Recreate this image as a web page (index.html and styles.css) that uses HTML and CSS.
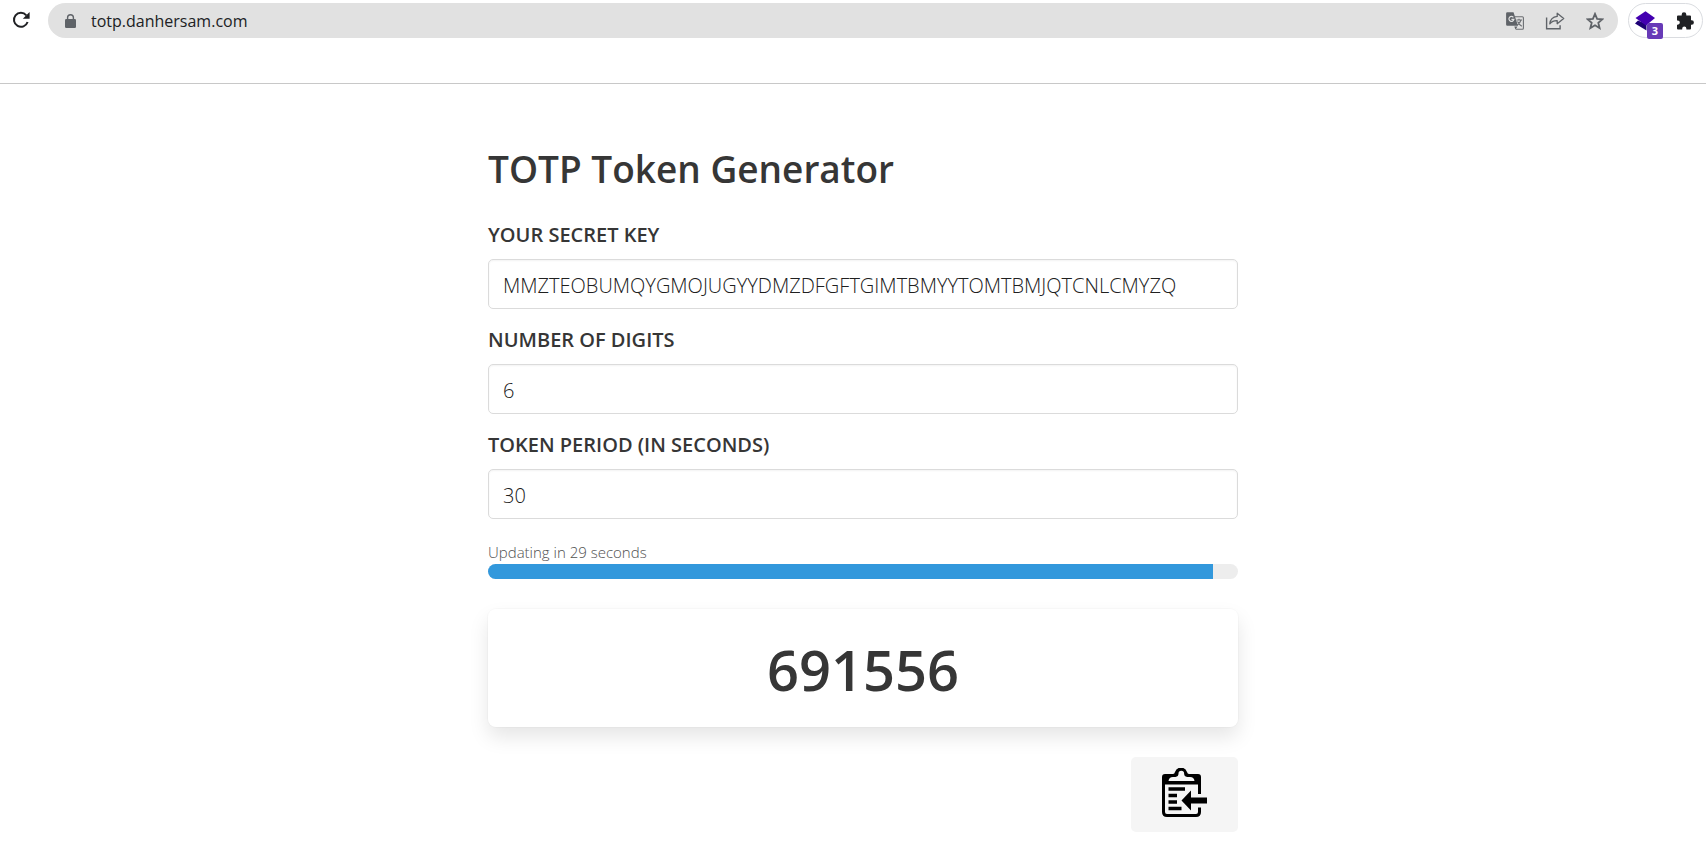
FILE: index.html
```html
<!DOCTYPE html>
<html lang="en">
<head>
<meta charset="utf-8">
<title>TOTP Token Generator</title>
<link rel="stylesheet" href="styles.css">
</head>
<body>
<header class="toolbar">
  <button class="icon-button reload" type="button" aria-label="Reload">
    <svg width="18" height="18" viewBox="0 0 18 18"><path d="M14.300 4.300A7 7 0 1 0 15.600 11" fill="none" stroke="#202124" stroke-width="2"/><path d="M17.600 1v6.800h-6.800z" fill="#202124"/></svg>
  </button>
  <div class="omnibox">
    <svg class="lock" width="11" height="14" viewBox="0 0 11 14"><path d="M2.600 5.500V3.600a2.900 2.900 0 0 1 5.800 0v1.900" fill="none" stroke="#5f6368" stroke-width="1.400"/><rect y="5" width="11" height="9" rx="1.200" fill="#5f6368"/></svg>
    <input class="address" type="text" value="totp.danhersam.com" aria-label="Address">
    <div class="actions">
      <button class="icon-button" type="button" aria-label="Translate">
        <svg width="18" height="18" viewBox="0 0 18 18"><path d="M9 4.700h7.400q1 0 1 1v10.500q0 1-1 1H9.800" fill="none" stroke="#6b6e72" stroke-width="1.100"/><path d="M1.300.2h6.200l4.500 13.500H1.300Q.1 13.700.1 12.500V1.400Q.1.200 1.300.2zM8.300 14.500h3.200l-2 2.900z" fill="#5f6368"/><path d="M7.400 5.300A2.500 2.500 0 1 0 7.900 7.400H5.400" fill="none" stroke="#e1e1e1" stroke-width="1.200"/><path d="M10.500 8h5.500M13 6.700V8M15 8q-.8 3-4 5.300M11.500 9.500q1.500 3 4.300 4.700" fill="none" stroke="#6b6e72" stroke-width="1.100"/></svg>
      </button>
      <button class="icon-button" type="button" aria-label="Share">
        <svg width="20" height="18" viewBox="0 0 20 18"><path d="M1.600 5.500v11.200h13.500v-3.400" fill="none" stroke="#5f6368" stroke-width="1.400"/><path d="M12.200 1.200l6.500 5.300-6.500 5.200V8.700q-4.700-.2-7.400 3.200.7-6.800 7.400-7.500z" fill="none" stroke="#5f6368" stroke-width="1.300" stroke-linejoin="round"/></svg>
      </button>
      <button class="icon-button" type="button" aria-label="Bookmark">
        <svg width="18" height="18" viewBox="0 0 18 18"><path d="M9 1.900l2.100 5 5.300.4-4.100 3.500 1.300 5.200L9 13.200 4.400 16l1.300-5.200-4.100-3.500 5.300-.4z" fill="none" stroke="#5f6368" stroke-width="1.800"/></svg>
      </button>
    </div>
  </div>
  <div class="extensions">
    <button class="icon-button layers" type="button" aria-label="Extension, 3 items">
      <svg width="20" height="20" viewBox="0 0 20 20"><path d="M0 12.500l3-3 8.500 3.500v6.500z" fill="#1d0075"/><path d="M.5 7L10.500.3 20 7l-9 7.500z" fill="#4300b0"/></svg>
      <span class="badge">3</span>
    </button>
    <button class="icon-button" type="button" aria-label="Extensions">
      <svg width="18" height="18" viewBox="0 0 18 18"><path d="M1 4.500q0-1 1-1h3.700V2.600a2.300 2.300 0 0 1 4.600 0v.9H14q1 0 1 1v3.800h.7a2.200 2.200 0 0 1 0 4.400H15v3.800q0 1-1 1h-3.600v-.8a2.100 2.100 0 0 0-4.200 0v.8H2q-1 0-1-1v-3.800h.7a2.150 2.150 0 0 0 0-4.300H1z" fill="#202124"/></svg>
    </button>
  </div>
</header>
<main class="page">
  <form class="generator">
    <h1 class="title">TOTP Token Generator</h1>
    <div class="field">
      <label class="label" for="secret">YOUR SECRET KEY</label>
      <input class="input" id="secret" type="text" value="MMZTEOBUMQYGMOJUGYYDMZDFGFTGIMTBMYYTOMTBMJQTCNLCMYZQ" spellcheck="false">
    </div>
    <div class="field">
      <label class="label" for="digits">NUMBER OF DIGITS</label>
      <input class="input" id="digits" type="text" value="6">
    </div>
    <div class="field">
      <label class="label" for="period">TOKEN PERIOD (IN SECONDS)</label>
      <input class="input" id="period" type="text" value="30">
    </div>
    <div class="countdown">
      <span class="hint" id="hint">Updating in 29 seconds</span>
      <div class="track" role="progressbar" aria-labelledby="hint" aria-valuenow="29" aria-valuemax="30"><div class="fill" style="width: 96.67%"></div></div>
    </div>
    <output class="token">691556</output>
    <button class="copy" type="button" aria-label="Copy token">
      <svg width="46" height="50" viewBox="0 0 46 50"><path d="M37.500 26V11M1.500 11v33q0 3.500 3.500 3.500h29q3.500 0 3.500-3.500v-4.500" fill="none" stroke="#000" stroke-width="3"/><path d="M3 6h8q1.500 0 2-2a6.300 6.300 0 0 1 12 0q.5 2 2 2h9q3 0 3 3v7.500H0V9q0-3 3-3z" fill="#000"/><path d="M6.500 13q.5-4 4.500-4h2.500q3-.5 3-3.500a2.800 2.800 0 0 1 5.600 0q0 3 3 3.500H28q4 0 4.500 4z" fill="#f5f5f5"/><path d="M6.500 21H23M6.500 27.500H15M6.500 34H15M6.500 40.500h13" stroke="#000" stroke-width="3.500"/><path d="M19.500 32.500L29 22.500v7h16v6H29v7z" fill="#000"/></svg>
    </button>
  </form>
</main>
</body>
</html>
```
FILE: styles.css
```css
* { box-sizing: border-box; }

body {
  margin: 0;
  background: #fff;
  color: #363636;
  font-family: "Open Sans", "Noto Sans", sans-serif;
  font-size: 20px;
}

.toolbar {
  display: flex;
  align-items: flex-start;
  height: 84px;
  padding: 3px 3px 0 12px;
  border-bottom: 1px solid #c8c8c8;
}

.icon-button {
  display: flex;
  padding: 0;
  border: 0;
  background: none;
}

.reload { padding: 8px 0; margin-right: 18px; }

.omnibox {
  display: flex;
  flex: 1;
  align-items: center;
  height: 35px;
  padding: 0 14px 0 17px;
  border-radius: 18px;
  background: #e1e1e1;
}

.address {
  flex: 1;
  min-width: 0;
  padding: 0 15px;
  border: 0;
  background: none;
  color: #202124;
  font: 16px "Open Sans", "Noto Sans", sans-serif;
}

.actions { display: flex; gap: 21px; }

.extensions {
  display: flex;
  align-items: center;
  justify-content: space-between;
  width: 75px;
  height: 35px;
  margin-left: 10px;
  padding: 0 8px 0 6px;
  border: 1px solid #dadce0;
  border-radius: 18px;
}

.layers { position: relative; }

.badge {
  position: absolute;
  left: 12px;
  top: 12px;
  width: 16px;
  height: 16px;
  border-radius: 2px;
  background: #673ab7;
  color: #fff;
  font: bold 11px/16px "Open Sans", sans-serif;
  text-align: center;
}

.page { padding: 62px 0 22px 20px; }

.generator {
  display: flex;
  flex-direction: column;
  width: 100%;
  max-width: 750px;
  margin: 0 auto;
}

.title {
  margin: 0 0 28px;
  font-size: 37px;
  font-weight: 600;
  line-height: 46px;
}

.field {
  display: flex;
  flex-direction: column;
  gap: 9px;
  margin-bottom: 16px;
}

.label {
  font-size: 20px;
  font-weight: 600;
  line-height: 30px;
}

.input {
  width: 100%;
  height: 50px;
  padding: 3px 14px 0;
  border: 1px solid #dbdbdb;
  border-radius: 5px;
  background: #fff;
  box-shadow: inset 0 1px 2px rgba(10, 10, 10, 0.05);
  color: #202020;
  font: 300 20px "Open Sans", "Noto Sans", sans-serif;
}

.countdown { margin-top: 5px; }

.hint {
  display: block;
  color: #505050;
  font-size: 15px;
  font-weight: 300;
  line-height: 24px;
}

.track {
  height: 15px;
  overflow: hidden;
  border-radius: 8px;
  background: #ededed;
}

.fill {
  height: 100%;
  background: #3298dc;
}

.token {
  margin-top: 30px;
  padding: 26px 25px 24px;
  border-radius: 8px;
  box-shadow: 0 10px 20px rgba(10, 10, 10, 0.1), 0 0 0 1px rgba(10, 10, 10, 0.02);
  font-size: 56px;
  font-weight: 600;
  line-height: 68px;
  text-align: center;
}

.copy {
  align-self: flex-end;
  display: flex;
  align-items: flex-start;
  justify-content: center;
  width: 107px;
  height: 75px;
  margin-top: 30px;
  padding: 11px 0;
  border: 0;
  border-radius: 5px;
  background: #f5f5f5;
}
```
